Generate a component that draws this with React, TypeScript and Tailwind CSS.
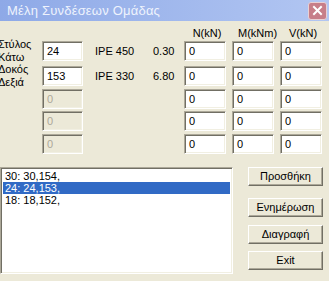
import React from "react";

const sunken =
  "border border-t-[#aca899] border-l-[#aca899] border-b-white border-r-white shadow-[inset_1px_1px_0_#716f64,inset_-1px_-1px_0_#f1efe2]";

function Field({ value, disabled, wide }: { value: string; disabled?: boolean; wide?: boolean }) {
  return (
    <div
      className={`${wide ? "w-[42px]" : "w-[41px]"} h-[20px] shrink-0 flex items-center pl-[4px] ${sunken} ${
        disabled ? "bg-[#ece9d8] text-[#aca899]" : "bg-white text-black"
      }`}
    >
      {value}
    </div>
  );
}

function Btn({ label, className }: { label: string; className: string }) {
  return (
    <div
      className={`w-[75px] h-[19px] flex items-center justify-center bg-[#ece9d8] border border-t-white border-l-white border-b-[#716f64] border-r-[#716f64] shadow-[inset_-1px_-1px_0_#aca899] ${className}`}
    >
      {label}
    </div>
  );
}

type Row = {
  label?: [string, string];
  left: string;
  disabled: boolean;
  section?: string;
  value?: string;
  mt: string;
};

const rows: Row[] = [
  { label: ["Στύλος", "Κάτω"], left: "24", disabled: false, section: "IPE 450", value: "0.30", mt: "mt-[1px]" },
  { label: ["Δοκός", "Δεξιά"], left: "153", disabled: false, section: "IPE 330", value: "6.80", mt: "mt-[5px]" },
  { left: "0", disabled: true, mt: "mt-[3px]" },
  { left: "0", disabled: true, mt: "mt-[2px]" },
  { left: "0", disabled: true, mt: "mt-[3px]" },
];

const items = ["30: 30,154,", "24: 24,153,", "18: 18,152,"];

export default function App() {
  return (
    <div
      className="w-[329px] h-[281px] overflow-hidden bg-[#ece9d8] text-[11px] leading-[13px] text-black"
      style={{ fontFamily: '"Liberation Sans", Arial, sans-serif' }}
    >
      {/* title bar */}
      <div className="h-[21px] flex items-center justify-between bg-gradient-to-r from-[#8ea9e7] to-[#b2c6f2] pl-[7px] pr-[2px]">
        <span className="text-[13px] text-[#eef3fd] tracking-[0.2px]">Μέλη Συνδέσεων Ομάδας</span>
        <div className="w-[19px] h-[18px] rounded-[3px] border border-[#e8d0d4] bg-[#c77e89] flex items-center justify-center">
          <svg width="11" height="11" viewBox="0 0 11 11">
            <path d="M2 2 L9 9 M9 2 L2 9" stroke="white" strokeWidth="2" strokeLinecap="square" />
          </svg>
        </div>
      </div>

      {/* column headers */}
      <div className="mt-[6px] flex">
        <div className="w-[186px] shrink-0" />
        <div className="w-[42px] text-center">N(kN)</div>
        <div className="w-[6px]" />
        <div className="w-[42px] text-center pl-[4px]">M(kNm)</div>
        <div className="w-[6px]" />
        <div className="w-[42px] text-center">V(kN)</div>
      </div>

      {rows.map((r, i) => (
        <div key={i} className={`flex items-center h-[20px] ${r.mt}`}>
          <div className="w-[44px] shrink-0 -ml-[2px] pr-[2px]">
            {r.label && (
              <div className="flex flex-col">
                <span>{r.label[0]}</span>
                <span>{r.label[1]}</span>
              </div>
            )}
          </div>
          <Field value={r.left} disabled={r.disabled} />
          <div className="w-[58px] shrink-0 ml-[12px]">{r.section}</div>
          <div className="w-[31px] shrink-0">{r.value}</div>
          <Field value="0" wide />
          <div className="w-[6px] shrink-0" />
          <Field value="0" wide />
          <div className="w-[6px] shrink-0" />
          <Field value="0" wide />
        </div>
      ))}

      {/* list + buttons */}
      <div className="mt-[13px] flex">
        <div className={`w-[233px] h-[107px] bg-white pt-[2px] px-[2px] ${sunken}`}>
          {items.map((it, i) => (
            <div
              key={it}
              className={`h-[12px] leading-[12px] pl-[2px] ${i === 1 ? "bg-[#316ac5] text-white" : ""}`}
            >
              {it}
            </div>
          ))}
        </div>
        <div className="ml-[15px] flex flex-col">
          <Btn label="Προσθήκη" className="mt-0" />
          <Btn label="Ενημέρωση" className="mt-[12px]" />
          <Btn label="Διαγραφή" className="mt-[8px]" />
          <Btn label="Exit" className="mt-[7px]" />
        </div>
      </div>
    </div>
  );
}
